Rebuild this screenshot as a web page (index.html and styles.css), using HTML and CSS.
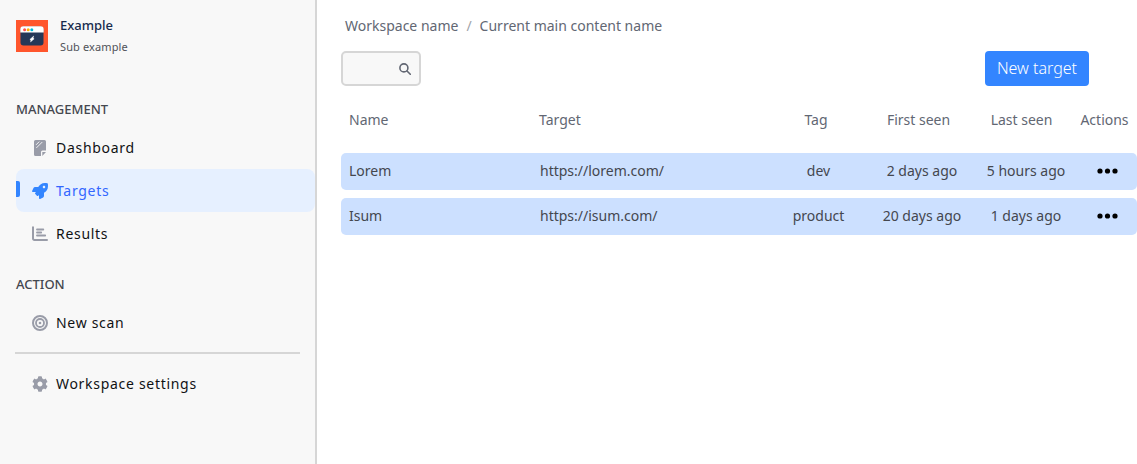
FILE: index.html
```html
<!DOCTYPE html>
<html lang="en">
<head>
<meta charset="utf-8">
<title>Targets</title>
<link rel="stylesheet" href="styles.css">
</head>
<body>
<div class="app">
  <aside class="sidebar">
    <div class="brand">
      <svg class="logo" viewBox="0 0 32 32">
        <rect width="32" height="32" fill="#ff562d"/>
        <rect x="4.500" y="6.500" width="23" height="19" rx="3" fill="#253858"/>
        <path d="M4.300 12.400V9.300a3 3 0 0 1 3-3h17.400a3 3 0 0 1 3 3v3.100z" fill="#fff"/>
        <circle cx="8.600" cy="9.700" r="1.500" fill="#ff5050"/>
        <circle cx="12.200" cy="9.700" r="1.500" fill="#ffb300"/>
        <circle cx="15.800" cy="9.700" r="1.500" fill="#00b8d9"/>
        <path d="M17.600 16.200l-3.700 3.300 1.200.5-.5 1.800 3.500-3-1.200-.5z" fill="#fff" stroke="#fff" stroke-width=".6"/>
      </svg>
      <div>
        <div class="brand-name">Example</div>
        <div class="brand-sub">Sub example</div>
      </div>
    </div>
    <h2 class="group-title">MANAGEMENT</h2>
    <nav class="nav">
      <a class="item">
        <svg class="icon" viewBox="0 0 16 16"><path d="M3.500 0h9A1.500 1.500 0 0 1 14 1.500V10.500H10.500a1.500 1.500 0 0 0-1.500 1.500V16H3.500A1.500 1.500 0 0 1 2 14.500v-13A1.500 1.500 0 0 1 3.500 0zM10.300 12H14l-3.700 4z"/><path d="M4.300 4.600l2.700-2.700M4.600 7.700l5.400-5.400" stroke="#f8f8f8" stroke-width=".9" stroke-linecap="round"/></svg>
        Dashboard
      </a>
      <a class="item active">
        <svg class="icon" viewBox="0 0 512 512"><path fill="currentColor" d="M505.100 19.100C503.800 13 499 8.200 492.900 6.900 460.700 0 435.500 0 410.400 0 307.200 0 245.300 55.200 199.100 128H94.800c-16.300 0-35.600 11.900-42.900 26.500L2.500 253.300C.9 256.500 0 260.400 0 264c0 13.300 10.700 24 24 24h103.800l-22.500 22.500c-11.400 11.400-13 32.300 0 45.300l50.900 50.900c11.200 11.200 32.200 13.200 45.200 0l22.500-22.500V488c0 13.200 10.800 24 24 24 3.600 0 7.500-.9 10.700-2.500l98.700-49.400c14.600-7.300 26.500-26.500 26.500-42.900V312.800c72.600-46.300 128-108.400 128-211.100.1-25.200.1-50.400-6.700-82.600zM384 168c-22.100 0-40-17.900-40-40s17.900-40 40-40 40 17.900 40 40-17.900 40-40 40z"/></svg>
        Targets
      </a>
      <a class="item">
        <svg class="icon" viewBox="0 0 16 16" fill="none" stroke="currentColor" stroke-linecap="round"><path d="M1 1.200v11.400a1.400 1.400 0 0 0 1.400 1.400H15" stroke-width="2"/><path d="M5 3.500h6.300M5 6.500h4.200M5 9.500h8.200" stroke-width="1.800"/></svg>
        Results
      </a>
    </nav>
    <h2 class="group-title action">ACTION</h2>
    <nav class="nav">
      <a class="item">
        <svg class="icon" viewBox="0 0 16 16" fill="none" stroke="currentColor"><circle cx="8" cy="8" r="7" stroke-width="2"/><circle cx="8" cy="8" r="4" stroke-width="1.800"/><circle cx="8" cy="8" r="1.300" fill="currentColor" stroke="none"/></svg>
        New scan
      </a>
    </nav>
    <hr class="divider">
    <nav class="nav">
      <a class="item">
        <svg class="icon" viewBox="0 0 512 512"><path fill="currentColor" d="M487.400 315.700l-42.600-24.600c4.300-23.200 4.300-47 0-70.200l42.600-24.600c4.900-2.800 7.100-8.600 5.500-14-11.100-35.600-30-67.800-54.700-94.600-3.800-4.100-10-5.100-14.800-2.300L380.800 110c-17.900-15.400-38.500-27.300-60.800-35.100V25.800c0-5.600-3.900-10.500-9.400-11.700-36.700-8.200-74.300-7.800-109.200 0-5.500 1.200-9.400 6.100-9.400 11.700V75c-22.200 7.900-42.800 19.800-60.800 35.100L88.700 85.500c-4.900-2.800-11-1.900-14.800 2.300-24.700 26.700-43.600 58.900-54.700 94.600-1.700 5.400.6 11.200 5.500 14L67.300 221c-4.300 23.200-4.300 47 0 70.200l-42.600 24.600c-4.900 2.800-7.100 8.600-5.500 14 11.100 35.600 30 67.800 54.700 94.600 3.800 4.100 10 5.100 14.800 2.300l42.600-24.600c17.900 15.400 38.500 27.300 60.800 35.100v49.200c0 5.600 3.900 10.500 9.400 11.700 36.700 8.200 74.300 7.800 109.200 0 5.500-1.200 9.400-6.100 9.400-11.700v-49.200c22.200-7.900 42.800-19.800 60.800-35.100l42.600 24.600c4.900 2.800 11 1.900 14.800-2.300 24.700-26.700 43.600-58.900 54.700-94.600 1.500-5.500-.7-11.300-5.600-14.100zM256 336c-44.100 0-80-35.900-80-80s35.900-80 80-80 80 35.900 80 80-35.900 80-80 80z"/></svg>
        Workspace settings
      </a>
    </nav>
  </aside>
  <main class="main">
    <div class="crumbs"><span>Workspace name</span><span class="slash">/</span><span>Current main content name</span></div>
    <div class="toolbar">
      <div class="search">
        <svg class="search-icon" viewBox="0 0 12 12" fill="none" stroke="currentColor" stroke-width="1.600" stroke-linecap="round"><circle cx="4.900" cy="4.900" r="4"/><path d="M8 8l3.300 3.300"/></svg>
      </div>
      <button class="primary">New target</button>
    </div>
    <div class="table">
      <div class="thead"><span>Name</span><span>Target</span><span>Tag</span><span>First seen</span><span>Last seen</span><span>Actions</span></div>
      <div class="row"><span>Lorem</span><span>https://lorem.com/</span><span>dev</span><span>2 days ago</span><span>5 hours ago</span><span class="more"><svg class="dots" viewBox="0 0 21 6"><circle cx="3" cy="3" r="2.600"/><circle cx="10.500" cy="3" r="2.600"/><circle cx="18" cy="3" r="2.600"/></svg></span></div>
      <div class="row"><span>Isum</span><span>https://isum.com/</span><span>product</span><span>20 days ago</span><span>1 days ago</span><span class="more"><svg class="dots" viewBox="0 0 21 6"><circle cx="3" cy="3" r="2.600"/><circle cx="10.500" cy="3" r="2.600"/><circle cx="18" cy="3" r="2.600"/></svg></span></div>
    </div>
  </main>
</div>
</body>
</html>
```
FILE: styles.css
```css
* { box-sizing: border-box; }
body {
  margin: 0;
  background: #fff;
  font: 14px/20px "Noto Sans", sans-serif;
  overflow: hidden;
}
svg { display: block; flex: none; }
.app { display: flex; height: 464px; }
.sidebar {
  width: 317px;
  flex: none;
  background: #f8f8f8;
  border-right: 2px solid #d6d6d6;
}
.brand { display: flex; gap: 12px; padding: 15px 16px 0; height: 99px; }
.logo { width: 32px; height: 32px; margin-top: 5px; }
.brand-name { font-size: 13px; font-weight: 500; color: #172b4d; }
.brand-sub { font-size: 11px; line-height: 16px; letter-spacing: .12px; margin-top: 4px; color: #505258; }
.group-title { margin: 0 0 7px 16px; font-size: 13px; line-height: 20px; font-weight: 500; color: #44474f; }
.group-title.action { margin-top: 19px; }
.nav { padding-left: 16px; }
.item {
  display: flex;
  align-items: center;
  gap: 8px;
  height: 43px;
  padding-left: 16px;
  border-radius: 8px;
  color: #101214;
  letter-spacing: .7px;
}
.icon { width: 16px; height: 16px; color: #999ca8; fill: currentColor; }
.icon[fill="none"] { fill: none; }
.active {
  padding-left: 0;
  gap: 8px;
  background: #e6f0ff;
  color: #3366ff;
}
.active::before {
  content: "";
  width: 4px;
  height: 16px;
  margin: -4px 4px 0 0;
  border-radius: 0 2px 2px 0;
  background: #3385ff;
}
.active .icon { color: #3385ff; }
.divider { height: 2px; margin: 8px 15px 8px; border: 0; background: #d6d6d6; }
.main { flex: 1; padding: 16px 0 0 24px; }
.crumbs { display: flex; gap: 8px; padding-left: 4px; color: #626773; }
.slash { color: #a0a3aa; }
.toolbar { display: flex; justify-content: space-between; margin: 15px 48px 0 0; }
.search {
  display: flex;
  align-items: center;
  justify-content: flex-end;
  width: 80px;
  height: 35px;
  padding-right: 8px;
  border: 2px solid #d6d6d6;
  border-radius: 5px;
  background: #f8f8f8;
}
.search-icon { width: 12px; height: 12px; color: #626773; }
.primary {
  width: 104px;
  height: 35px;
  padding: 0;
  border: 0;
  border-radius: 4px;
  background: #3385ff;
  color: #fff;
  font: 300 16px/35px "Noto Sans", sans-serif;
}
.thead, .row { display: grid; align-items: center; text-align: center; }
.thead {
  grid-template-columns: 190px 235px 100px 105px 101px 65px;
  height: 67px;
  color: #626773;
}
.row {
  grid-template-columns: 191px 236px 101px 106px 102px 60px;
  height: 37px;
  margin-bottom: 8px;
  padding-bottom: 1px;
  border-radius: 5px;
  background: #cce0ff;
  color: #44474f;
}
.thead span:nth-child(-n+2), .row span:nth-child(-n+2) { padding-left: 8px; text-align: left; }
.more { display: flex; justify-content: center; }
.dots { width: 21px; height: 6px; }
```
